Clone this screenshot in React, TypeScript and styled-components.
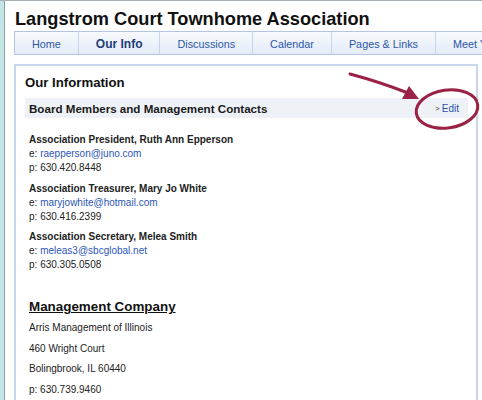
import React from "react";
import styled, { createGlobalStyle } from "styled-components";

const GlobalStyle = createGlobalStyle`
  html, body { margin: 0; padding: 0; background: #ffffff; }
  body { font-family: "Liberation Sans", Arial, Helvetica, sans-serif; color: #1f1f1f; overflow: hidden; }
  * { box-sizing: border-box; }
`;

const Frame = styled.div`
  position: relative;
  display: flex;
  width: 482px;
  height: 400px;
  overflow: hidden;
  border-top: 1px solid #a9b0b4;
`;

const SideStrip = styled.div`
  flex: 0 0 5px;
  background: #c3e5e6;
  border-right: 1px solid #8e9ea4;
`;

const Main = styled.div`
  flex: 1;
  min-width: 0;
  padding: 8px 4px 0 9px;
`;

const Title = styled.h1`
  margin: 0 0 1px 1px;
  font-size: 18.2px;
  line-height: 21px;
  font-weight: bold;
  color: #111;
  white-space: nowrap;
`;

const NavBar = styled.nav`
  display: flex;
  width: max-content;
  height: 24px;
  background: linear-gradient(#f6f9fd, #e5ecf7);
  border: 1px solid #b4c4e3;
`;

const NavItem = styled.a<{ $active?: boolean }>`
  flex: 0 0 auto;
  display: flex;
  align-items: center;
  padding: 2px 17px 0;
  border-right: 1px solid #c6d3ec;
  font-size: ${(p) => (p.$active ? "12px" : "10.8px")};
  font-weight: ${(p) => (p.$active ? "bold" : "normal")};
  color: ${(p) => (p.$active ? "#1d3c7a" : "#2b56a8")};
  text-decoration: none;
  white-space: nowrap;
`;

const ContentBox = styled.section`
  margin-top: 9px;
  border: 2px solid #cad6ee;
  border-bottom: none;
  padding: 9px 8px 0 9px;
  height: 400px;
`;

const SectionTitle = styled.h2`
  margin: 0 0 7px;
  font-size: 13.2px;
  line-height: 16px;
  font-weight: bold;
  color: #111;
`;

const BarHeader = styled.div`
  display: flex;
  align-items: center;
  justify-content: space-between;
  height: 20px;
  padding: 0 9px 0 4px;
  background: #eef2f7;
`;

const BarTitle = styled.span`
  font-size: 11.6px;
  font-weight: bold;
  color: #1a1a1a;
`;

const EditLink = styled.a`
  display: flex;
  align-items: center;
  gap: 2px;
  padding-top: 1px;
  font-size: 10px;
  color: #2b4fae;
  text-decoration: none;
`;

const Chevron = styled.span`
  font-size: 8px;
  color: #333;
`;

const Contacts = styled.div`
  padding: 15px 0 0 4px;
  display: flex;
  flex-direction: column;
  gap: 6.5px;
`;

const ContactBlock = styled.div`
  display: flex;
  flex-direction: column;
`;

const Line = styled.div<{ $bold?: boolean }>`
  font-size: 10px;
  line-height: 14px;
  font-weight: ${(p) => (p.$bold ? "bold" : "normal")};
  color: #222;
`;

const Mail = styled.a`
  color: #2c56b6;
  text-decoration: none;
`;

const Company = styled.div`
  padding: 26px 0 0 4px;
`;

const CompanyTitle = styled.h3`
  margin: 0 0 2px;
  font-size: 13.4px;
  line-height: 18px;
  font-weight: bold;
  text-decoration: underline;
  color: #111;
`;

const CompanyLine = styled.div`
  font-size: 10px;
  line-height: 20.5px;
  color: #222;
`;

const Annotation = styled.svg`
  position: absolute;
  left: 0;
  top: 0;
  width: 482px;
  height: 400px;
  pointer-events: none;
`;

const navItems = ["Home", "Our Info", "Discussions", "Calendar", "Pages & Links", "Meet Your Neighbors"];

const contacts = [
  { title: "Association President, Ruth Ann Epperson", email: "raepperson@juno.com", phone: "630.420.8448" },
  { title: "Association Treasurer, Mary Jo White", email: "maryjowhite@hotmail.com", phone: "630.416.2399" },
  { title: "Association Secretary, Melea Smith", email: "meleas3@sbcglobal.net", phone: "630.305.0508" },
];

export default function App() {
  return (
    <>
      <GlobalStyle />
      <Frame>
        <SideStrip />
        <Main>
          <Title>Langstrom Court Townhome Association</Title>
          <NavBar>
            {navItems.map((n) => (
              <NavItem key={n} $active={n === "Our Info"}>
                {n}
              </NavItem>
            ))}
          </NavBar>
          <ContentBox>
            <SectionTitle>Our Information</SectionTitle>
            <BarHeader>
              <BarTitle>Board Members and Management Contacts</BarTitle>
              <EditLink>
                <Chevron>&gt;</Chevron>Edit
              </EditLink>
            </BarHeader>
            <Contacts>
              {contacts.map((c) => (
                <ContactBlock key={c.title}>
                  <Line $bold>{c.title}</Line>
                  <Line>
                    e: <Mail>{c.email}</Mail>
                  </Line>
                  <Line>p: {c.phone}</Line>
                </ContactBlock>
              ))}
            </Contacts>
            <Company>
              <CompanyTitle>Management Company</CompanyTitle>
              <CompanyLine>Arris Management of Illinois</CompanyLine>
              <CompanyLine>460 Wright Court</CompanyLine>
              <CompanyLine>Bolingbrook, IL 60440</CompanyLine>
              <CompanyLine>p: 630.739.9460</CompanyLine>
            </Company>
          </ContentBox>
        </Main>
        <Annotation viewBox="0 0 482 400">
          <ellipse
            cx="447"
            cy="108"
            rx="31"
            ry="19"
            transform="rotate(-8 447 108)"
            fill="none"
            stroke="#9a2244"
            strokeWidth="3"
          />
          <path d="M350 73 Q380 81 408 92" fill="none" stroke="#9a2244" strokeWidth="3" strokeLinecap="round" />
          <polygon points="419,98 402,98 409,85" fill="#9a2244" />
        </Annotation>
      </Frame>
    </>
  );
}
